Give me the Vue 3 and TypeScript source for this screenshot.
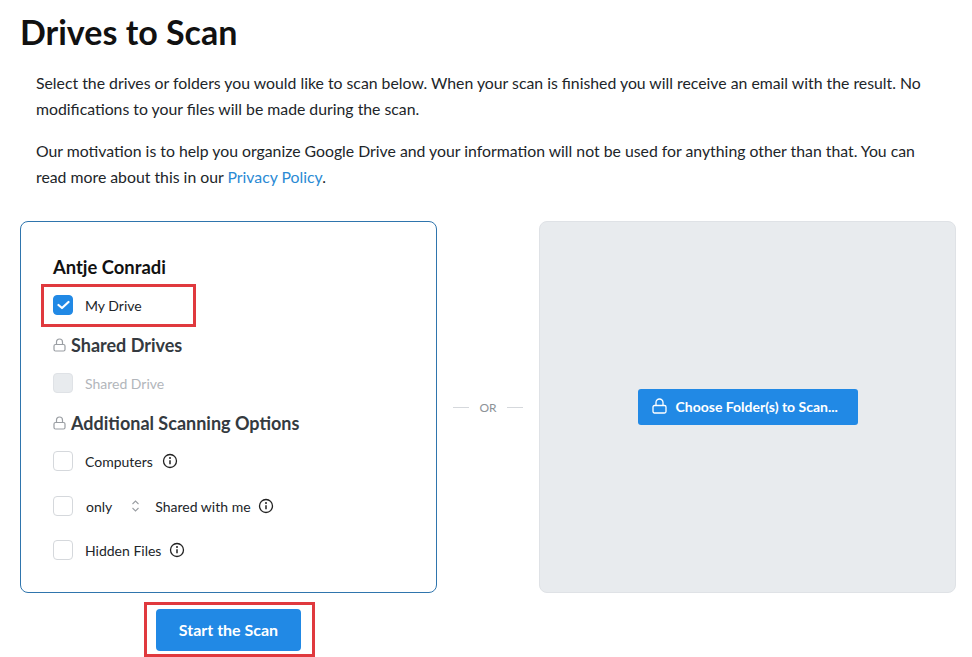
<script setup lang="ts">
const title = 'Drives to Scan'
</script>

<template>
  <main class="page">
    <h1 class="title">{{ title }}</h1>
    <div class="intro">
      <p>Select the drives or folders you would like to scan below. When your scan is finished you will receive an email with the result. No modifications to your files will be made during the scan.</p>
      <p>Our motivation is to help you organize Google Drive and your information will not be used for anything other than that. You can read more about this in our <a class="link">Privacy Policy</a>.</p>
    </div>
    <div class="columns">
      <div class="left">
        <section class="card">
          <h2 class="owner">Antje Conradi</h2>
          <div class="row first">
            <span class="box checked">
              <svg width="13" height="10" viewBox="0 0 13 10"><path d="M1.500 5 5 8l6.500-6" fill="none" stroke="#fff" stroke-width="2.200" stroke-linecap="round" stroke-linejoin="round"/></svg>
            </span>
            <span class="label">My Drive</span>
            <span class="mark mark-drive"></span>
          </div>
          <h3 class="head shared">
            <svg class="lock" width="13" height="14" viewBox="0 0 13 14"><path d="M3.5 6.5V4a3 3 0 0 1 6 0v2.500" fill="none" stroke="#9a9ea3" stroke-width="1.200"/><rect x="1" y="6.500" width="11" height="6.500" rx="1.500" fill="none" stroke="#9a9ea3" stroke-width="1.200"/></svg>
            Shared Drives
          </h3>
          <div class="row disabled">
            <span class="box off"></span>
            <span class="label">Shared Drive</span>
          </div>
          <h3 class="head additional">
            <svg class="lock" width="13" height="14" viewBox="0 0 13 14"><path d="M3.5 6.5V4a3 3 0 0 1 6 0v2.500" fill="none" stroke="#9a9ea3" stroke-width="1.200"/><rect x="1" y="6.500" width="11" height="6.500" rx="1.500" fill="none" stroke="#9a9ea3" stroke-width="1.200"/></svg>
            Additional Scanning Options
          </h3>
          <div class="row computers">
            <span class="box"></span>
            <span class="label">Computers</span>
            <svg class="info" width="16" height="16" viewBox="0 0 16 16"><circle cx="8" cy="8" r="6.500" fill="none" stroke="#222" stroke-width="1.300"/><circle cx="8" cy="5" r="1" fill="#222"/><path d="M8 7.300v4" stroke="#222" stroke-width="1.500"/></svg>
          </div>
          <div class="row shared-me">
            <span class="box"></span>
            <span class="label only">only</span>
            <svg class="updown" width="9" height="14" viewBox="0 0 9 14"><path d="M1.500 5 4.500 2l3 3M1.500 9l3 3 3-3" fill="none" stroke="#9a9ea3" stroke-width="1.100"/></svg>
            <span class="label">Shared with me</span>
            <svg class="info" width="16" height="16" viewBox="0 0 16 16"><circle cx="8" cy="8" r="6.500" fill="none" stroke="#222" stroke-width="1.300"/><circle cx="8" cy="5" r="1" fill="#222"/><path d="M8 7.300v4" stroke="#222" stroke-width="1.500"/></svg>
          </div>
          <div class="row hidden-files">
            <span class="box"></span>
            <span class="label">Hidden Files</span>
            <svg class="info" width="16" height="16" viewBox="0 0 16 16"><circle cx="8" cy="8" r="6.500" fill="none" stroke="#222" stroke-width="1.300"/><circle cx="8" cy="5" r="1" fill="#222"/><path d="M8 7.300v4" stroke="#222" stroke-width="1.500"/></svg>
          </div>
        </section>
        <div class="start-wrap">
          <button class="start">Start the Scan</button>
          <span class="mark mark-start"></span>
        </div>
      </div>
      <div class="or"><i></i><span>OR</span><i></i></div>
      <section class="panel">
        <button class="choose">
          <svg width="15" height="16" viewBox="0 0 15 16"><path d="M4 7.500V4.500a3.500 3.500 0 0 1 7 0v3" fill="none" stroke="#fff" stroke-width="1.300"/><rect x="1" y="7.500" width="13" height="7.500" rx="1.500" fill="none" stroke="#fff" stroke-width="1.300"/></svg>
          Choose Folder(s) to Scan...
        </button>
      </section>
    </div>
  </main>
</template>

<style>
html, body { margin: 0; background: #fff; }
</style>

<style scoped>
.page {
  box-sizing: border-box;
  width: 972px;
  height: 657px;
  padding: 11px 16px 0 20px;
  overflow: hidden;
  font-family: Lato, "Liberation Sans", sans-serif;
  color: #212529;
}
.title {
  margin: 0;
  font-size: 34px;
  line-height: 42px;
  font-weight: 700;
  color: #111;
}
.intro { padding: 17px 20px 0 16px; }
.intro p {
  margin: 0 0 16px;
  font-size: 15.8px;
  line-height: 26px;
  color: #212529;
}
.link { color: #2a8ad4; }
.columns {
  display: flex;
  align-items: flex-start;
  margin-top: 31px;
}
.left { width: 417px; flex: none; }
.card {
  box-sizing: border-box;
  height: 372px;
  padding: 34px 32px 0;
  border: 1px solid #2f75ad;
  border-radius: 8px;
}
.owner {
  margin: 0;
  font-size: 18.4px;
  line-height: 22px;
  font-weight: 700;
  color: #111;
}
.row {
  display: flex;
  align-items: center;
  height: 20px;
  font-size: 14px;
}
.first { position: relative; margin-top: 17px; }
.box {
  box-sizing: border-box;
  display: flex;
  align-items: center;
  justify-content: center;
  width: 20px;
  height: 20px;
  flex: none;
  margin-right: 12px;
  border: 1px solid #d5d8dc;
  border-radius: 4px;
  background: #fff;
}
.checked { background: #2189e5; border-color: #2189e5; }
.off { background: #e8ebee; border-color: #dfe2e6; }
.label { color: #212529; }
.disabled .label { color: #b2b6bb; }
.head {
  display: flex;
  align-items: center;
  gap: 5px;
  margin: 0;
  height: 24px;
  font-size: 18px;
  font-weight: 700;
  color: #343a40;
}
.shared { margin-top: 18px; }
.disabled { margin-top: 16px; }
.additional { margin-top: 18px; }
.computers { margin-top: 16px; }
.computers .info { margin-left: 9px; }
.hidden-files .info { margin-left: 8px; }
.shared-me { margin-top: 25px; }
.shared-me .only { margin-left: 1px; }
.updown { margin: 0 15px 0 19px; }
.shared-me .info { margin-left: 7px; }
.hidden-files { margin-top: 24px; }
.start-wrap {
  position: relative;
  width: 145px;
  margin: 16px auto 0;
}
.start {
  display: block;
  width: 145px;
  height: 42px;
  padding: 0 0 2px;
  border: 0;
  border-radius: 4px;
  background: #2189e5;
  color: #fff;
  font: 700 16px Lato, "Liberation Sans", sans-serif;
}
.mark {
  position: absolute;
  box-sizing: border-box;
  border: 3px solid #e0393e;
  pointer-events: none;
}
.mark-drive { left: -12px; top: -11px; width: 155px; height: 43px; }
.mark-start { left: -12px; top: -7px; width: 171px; height: 55px; }
.or {
  width: 102px;
  flex: none;
  height: 372px;
  display: flex;
  align-items: center;
  justify-content: center;
  gap: 10px;
  font-size: 12px;
  color: #8d9297;
}
.or i { width: 16px; height: 1px; background: #d5d8dc; }
.panel {
  box-sizing: border-box;
  width: 417px;
  height: 372px;
  flex: none;
  display: flex;
  align-items: center;
  justify-content: center;
  background: #e8ebee;
  border: 1px solid #dfe2e6;
  border-radius: 8px;
}
.choose {
  display: flex;
  align-items: center;
  justify-content: flex-start;
  gap: 9px;
  width: 220px;
  height: 36px;
  padding: 0 0 2px 14px;
  border: 0;
  border-radius: 3px;
  background: #2189e5;
  color: #fff;
  font: 700 14px Lato, "Liberation Sans", sans-serif;
}
</style>
